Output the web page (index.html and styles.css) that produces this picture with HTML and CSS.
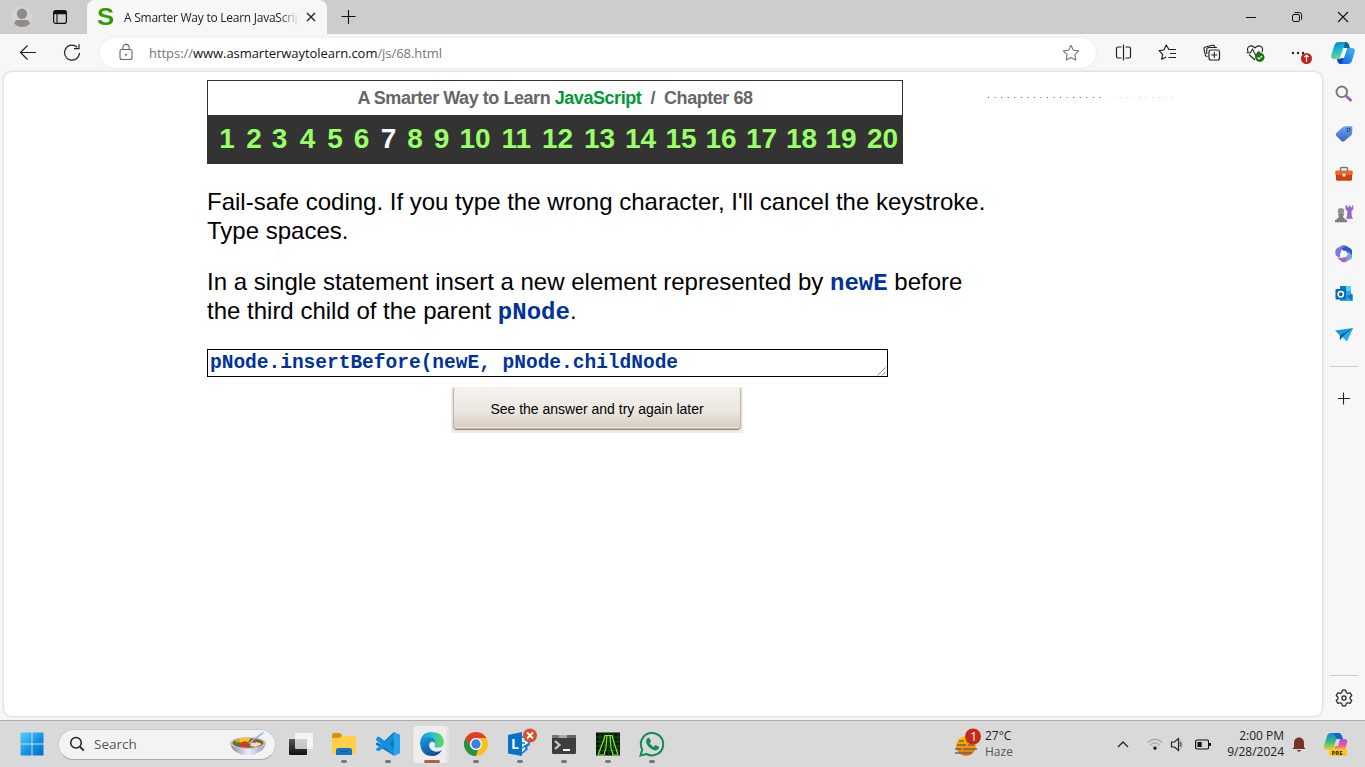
FILE: index.html
```html
<!DOCTYPE html>
<html lang="en">
<head>
<meta charset="utf-8">
<title>A Smarter Way to Learn JavaScript</title>
<link rel="stylesheet" href="styles.css">
</head>
<body>
<div class="screen">
  <header class="tabs">
    <svg class="avatar" width="24" height="24" viewBox="0 0 24 24"><circle cx="12" cy="12" r="10.5" fill="#d6d3d0"/><circle cx="12" cy="8.8" r="5.2" fill="#8f8b88"/><path d="M4.2 18.5q.5-3.6 3.6-3.6h8.6q3.1 0 3.5 3.6-3 3.5-7.8 3.5t-7.9-3.5z" fill="#8f8b88"/></svg>
    <svg class="workspaces" width="16" height="16" viewBox="0 0 16 16"><rect x="1.6" y="1.6" width="12.8" height="12.8" rx="2.2" fill="none" stroke="#111" stroke-width="1.2"/><path d="M1.5 5.3V3.5q0-2 2-2h9q2 0 2 2v1.8z" fill="#111"/><path d="M5 5v9.5" stroke="#111" stroke-width="1.1"/></svg>
    <div class="tab">
      <span class="favicon">S</span>
      <span class="tab-title">A Smarter Way to Learn JavaScript</span>
      <svg width="12" height="12" viewBox="0 0 12 12"><path d="M2 2l8 8M10 2l-8 8" stroke="#222" stroke-width="1.4"/></svg>
    </div>
    <svg class="new-tab" width="16" height="16" viewBox="0 0 16 16"><path d="M1.5 7.5h14M8.5 1v14" stroke="#111" stroke-width="1.1"/></svg>
    <div class="window-buttons">
      <svg width="46" height="34" viewBox="0 0 46 34"><path d="M18 17.5h10" stroke="#111"/></svg>
      <svg width="46" height="34" viewBox="0 0 46 34"><rect x="18.5" y="14.5" width="7" height="7" rx="1.5" fill="none" stroke="#111"/><path d="M20.5 12.6h5q2.1 0 2.1 2.1v5" fill="none" stroke="#111"/></svg>
      <svg width="46" height="34" viewBox="0 0 46 34"><path d="M18 12l10 10M28 12L18 22" stroke="#111" stroke-width="1.1"/></svg>
    </div>
  </header>

  <nav class="toolbar">
    <svg class="back" width="24" height="24" viewBox="0 0 24 24"><path d="M20 11.5H4.5M11.5 4.5l-7 7 7 7" fill="none" stroke="#222" stroke-width="1.2"/></svg>
    <svg class="reload" width="24" height="24" viewBox="0 0 24 24"><path d="M17.2 6.2A7.5 7.5 0 1 0 19.5 12" fill="none" stroke="#222" stroke-width="1.2"/><path d="M19 3.3v4.4h-5" fill="none" stroke="#222" stroke-width="1.2"/></svg>
    <div class="address">
      <svg width="24" height="24" viewBox="0 0 24 24"><rect x="6" y="8.5" width="12" height="10" rx="2" fill="none" stroke="#666" stroke-width="1.1"/><path d="M8.8 8.5V6.6a3.2 3.2 0 0 1 6.4 0v1.9" fill="none" stroke="#666" stroke-width="1.1"/><rect x="11.2" y="12.8" width="1.7" height="1.7" fill="#555"/></svg>
      <span class="url">https://<b>www.asmarterwaytolearn.com</b>/js/68.html</span>
      <svg class="star" width="24" height="24" viewBox="0 0 24 24"><path d="M12 4.2l2.4 5 5.4.7-4 3.8 1 5.4-4.8-2.7-4.8 2.7 1-5.4-4-3.8 5.4-.7z" fill="none" stroke="#777" stroke-width="1.1" stroke-linejoin="round"/></svg>
    </div>
    <div class="tools">
      <svg width="24" height="24" viewBox="0 0 24 24"><path d="M9.5 6H6q-1.5 0-1.5 1.5v8Q4.500 17 6 17h3.500M13.500 6H17q1.500 0 1.500 1.500v8Q18.500 17 17 17h-3.500M11.500 3.500v16" fill="none" stroke="#222" stroke-width="1.2"/></svg>
      <svg width="24" height="24" viewBox="0 0 24 24"><path d="M13.500 8.500h-.6L10.200 4 7.900 9l-4.800.7 3.500 3.600-.9 5 4.500-2.300M13.500 8.500H20M14 12.500h6M12.500 16.500H20" fill="none" stroke="#222" stroke-width="1.2" stroke-linejoin="round"/></svg>
      <svg width="24" height="24" viewBox="0 0 24 24"><rect x="9" y="9" width="10.500" height="10" rx="2" fill="none" stroke="#222" stroke-width="1.2"/><path d="M7.500 15.500q-1.500.2-2.100-1.200L4 8.500q-.4-2 1.400-2.500l7-1.800q1.800-.4 2.300 1.300l.4 1.500M6.700 13V9q0-2.500 2.500-2.500H17M14.300 11v6M11.300 14h6" fill="none" stroke="#222" stroke-width="1.1"/></svg>
      <svg class="health" width="24" height="24" viewBox="0 0 24 24"><path d="M4.200 11q-1.700-3.500.6-5.400 3.200-2 6.200 1.300 3-3.300 6.200-1.300 2.300 1.900.8 5.400M5 13.500l6 5.500M2.500 11.800h4l2-3.700 3.500 7 2-4h2" fill="none" stroke="#222" stroke-width="1.1"/><circle cx="15.800" cy="16.300" r="4.700" fill="#13780f"/><path d="M13.600 16.500l1.500 1.500 3-3.200" fill="none" stroke="#fff" stroke-width="1.100"/></svg>
      <svg class="more" width="28" height="24" viewBox="0 0 28 24"><g fill="#222"><circle cx="5" cy="12" r="1.200"/><circle cx="10" cy="12" r="1.200"/><circle cx="15" cy="12" r="1.200"/></g><circle cx="18.500" cy="17.500" r="5.500" fill="#c52020"/><path d="M18.500 21v-7M16.300 16.200l2.200-2.200 2.200 2.200" fill="none" stroke="#fff" stroke-width="1.200"/></svg>
      <svg class="copilot" width="26" height="26" viewBox="0 0 26 26">
        <defs><linearGradient id="cpA" x1="0" y1="0" x2=".4" y2="1"><stop offset="0" stop-color="#087fb5"/><stop offset=".5" stop-color="#19b5d8"/><stop offset="1" stop-color="#7be06e"/></linearGradient><linearGradient id="cpB" x1="1" y1="0" x2="0" y2="1"><stop offset="0" stop-color="#42b9f1"/><stop offset="1" stop-color="#1554df"/></linearGradient></defs>
        <path d="M9 2h7q2 0 2.800 2.500l1 3.500H17q-2 0-2.700 2L12 17q-.7 2-3 2H4q-3.500 0-2.600-4L4.500 5Q5.700 2 9 2z" fill="url(#cpA)"/><path d="M16.500 8H22q3.500 0 2.700 4l-3 9.500q-1 2.500-4 2.500h-7q-2.200 0-3-2.500L7 19h2.500q2 0 2.600-2z" fill="url(#cpB)"/><path d="M15.800 2q2.200 0 3 2.500l1 3.500H17l-2.500.8q-1.500-3.800 1.300-6.800z" fill="#0866a5"/><path d="M7 19h3q2 0 2.500-2 1.500 5-1.500 7-2.500 0-3.300-2.500z" fill="#173fce"/><path d="M13.300 8h4L14 18h-4z" fill="#f7f7f7"/></svg>
    </div>
  </nav>

  <div class="middle">
    <main class="page">
      <div class="lesson">
        <div class="chapter">
          <h1>A Smarter Way to Learn <em>JavaScript</em> &nbsp;/&nbsp; Chapter 68</h1>
          <div class="numbers"><a>1</a><a>2</a><a>3</a><a>4</a><a>5</a><a>6</a><a class="current">7</a><a>8</a><a>9</a><a>10</a><a>11</a><a>12</a><a>13</a><a>14</a><a>15</a><a>16</a><a>17</a><a>18</a><a>19</a><a>20</a></div>
        </div>
        <p class="hint">Fail-safe coding. If you type the wrong character, I'll cancel the keystroke.<br>Type spaces.</p>
        <p class="question">In a single statement insert a new element represented by <code>newE</code> before<br>the third child of the parent <code>pNode</code>.</p>
        <div class="answer"><span>pNode.insertBefore(newE, pNode.childNode</span>
          <svg width="9" height="9" viewBox="0 0 9 9"><path d="M.5 8.500l8-8M5 8.500L8.500 5" stroke="#666" stroke-width=".8"/></svg></div>
        <div class="button-frame"><div class="button">See the answer and try again later</div></div>
      </div>
      <svg class="dots" width="190" height="3" viewBox="0 0 190 3"><path d="M1 1.500h115" stroke="#555" stroke-dasharray="1 5.550"/><path d="M132.500 1.500h56" stroke="#ccc" stroke-dasharray="1 5.500"/><path d="M120 1.500h1M126.500 1.500h1" stroke="#ddd"/></svg>
    </main>
    <aside class="sidebar">
      <svg width="20" height="20" viewBox="0 0 20 20"><path d="M11 11l6.500 6" stroke="#9b62cf" stroke-width="3"/><circle cx="7.800" cy="7.800" r="5.300" fill="#f2f7fb" stroke="#777" stroke-width="1.900"/></svg>
      <svg width="20" height="20" viewBox="0 0 20 20"><defs><linearGradient id="tag" x2="0" y2="1"><stop stop-color="#6da4ee"/><stop offset="1" stop-color="#3b67c5"/></linearGradient></defs><path d="M10.500 2.500l6.200-.5q1.800 0 1.800 1.800l-.6 6.100q-.1.800-.7 1.400L10.500 17q-1.500 1.300-3 0L2.300 12q-1.300-1.500 0-3L9 3.100q.6-.5 1.500-.6z" fill="url(#tag)"/><circle cx="14.500" cy="5.700" r="1.300" fill="#fff" stroke="#244b91" stroke-width="1.300"/></svg>
      <svg width="20" height="20" viewBox="0 0 20 20"><path d="M6.500 7V4.500q0-1 1-1h5q1 0 1 1V7" fill="none" stroke="#777" stroke-width="1.500"/><rect x="1.300" y="6.500" width="17.400" height="4.700" rx="1" fill="#e7682e"/><path d="M2 11h16v4.500q0 1.200-1.200 1.200H3.200Q2 16.700 2 15.500z" fill="#c84312"/><circle cx="10" cy="11" r="1.800" fill="#ddd"/></svg>
      <svg width="20" height="20" viewBox="0 0 20 20"><path d="M11.500 1.500h2v1.700H15V1.500h1.500v1.700H18V1.500h1.200v4L17.500 7l.3 5.500 1.200 2.300h-7l1-2.300.4-5.500-1.900-1.500z" fill="#9567ce"/><circle cx="7" cy="7.300" r="3.200" fill="#929292"/><path d="M4 10h6v1.500H8.700q.4 2.500 2.800 3.500v1H13v2.300H1V16h1.500v-1q2.500-1 2.800-3.500H4z" fill="#7e7e7e"/></svg>
      <svg width="20" height="20" viewBox="0 0 20 20"><path d="M8 1.500q2-.9 3.700.1L15.500 4l-8 1.500-2 8.500L2.400 12q-1-.8-1-2V7q0-1.600 1.300-2.400z" fill="#7c7bdc"/><path d="M12 2l4.600 2.600Q18 5.500 18 7.200V12l-5.700-2.500-5-4.500z" fill="#3156c7"/><path d="M12.500 9.500l5.500 1v2q0 1.700-1.300 2.400l-5.200 3q-1.800.9-3.400 0L3.500 14l5.500-.3z" fill="#9c69cc"/><path d="M14.500 7l3.500 5q.2 2-1.300 2.900L12 17.600z" fill="#6eaae8"/><path d="M8 6.700h4l2 3.300-2 3.300H8L6 10z" fill="#f7f7f7"/></svg>
      <svg width="20" height="20" viewBox="0 0 20 20"><path d="M6 2h11v7l1.500 2v6H6z" fill="#28a8ea"/><path d="M11 2h6v5h-6z" fill="#53d3f5"/><path d="M6 2h6v5H6zM12 12l6.500-2v7z" fill="#087cc3"/><rect x="1.500" y="5" width="10.500" height="10.500" rx="1" fill="#0869b5"/><circle cx="6.800" cy="10.200" r="2.700" fill="none" stroke="#fff" stroke-width="1.500"/></svg>
      <svg width="20" height="20" viewBox="0 0 20 20"><path d="M1 6.500L19 4l-6 13-4.500-4-2.600 3v-4.500z" fill="#199cdb"/><path d="M5.900 11.500L19 4 8.500 13l-2.600 3z" fill="#095f9b"/><path d="M8.500 13L19 4l-6 13z" fill="#23b1e9"/></svg>
      <hr class="rule">
      <svg class="add" width="20" height="20" viewBox="0 0 20 20"><path d="M4 10.500h12M9.500 4.500v12" stroke="#222" stroke-width="1.100"/></svg>
      <hr class="rule rule-low">
      <svg class="gear" width="20" height="20" viewBox="0 0 20 20"><path d="M8.300 2.200h3.400l.5 2.300 1.600.9 2.300-.7 1.700 2.900L16 9.200v1.700l1.800 1.600-1.700 2.900-2.300-.7-1.600.9-.5 2.300H8.300l-.5-2.300-1.600-.9-2.300.7-1.700-2.900L4 10.900V9.200L2.200 7.600l1.700-2.900 2.300.7 1.600-.9z" fill="none" stroke="#222" stroke-width="1.200" stroke-linejoin="round"/><circle cx="10" cy="10" r="2.100" fill="none" stroke="#222" stroke-width="1.200"/></svg>
    </aside>
  </div>

  <footer class="taskbar">
    <svg class="start" width="24" height="24" viewBox="0 0 24 24"><defs><linearGradient id="win" x2="1" y2="1"><stop stop-color="#4fd0fb"/><stop offset=".6" stop-color="#0c8ee2"/><stop offset="1" stop-color="#0070cb"/></linearGradient></defs><path d="M.5 1q0-.5.5-.5h10.500v11H.5zM12.500.5H23q.5 0 .5.500v10.500h-11zM.5 12.500h11v11H1q-.5 0-.5-.5zM12.500 12.500h11V23q0 .5-.5.500H12.500z" fill="url(#win)"/></svg>
    <div class="search">
      <svg width="16" height="16" viewBox="0 0 16 16"><circle cx="7" cy="6.800" r="5.300" fill="none" stroke="#222" stroke-width="1.500"/><path d="M10.800 10.600l4 4" stroke="#222" stroke-width="1.800"/></svg>
      <span>Search</span>
      <svg class="bowl" width="38" height="24" viewBox="0 0 38 24"><defs><linearGradient id="bowl" x2="1"><stop stop-color="#8582a7"/><stop offset=".5" stop-color="#f0edf8"/><stop offset="1" stop-color="#9f98b7"/></linearGradient></defs><path d="M1 11q2 9 10 10.800v1h15v-1q9-1.800 11-10.800z" fill="url(#bowl)"/><ellipse cx="19" cy="11" rx="18" ry="6" fill="#c7c3d8"/><ellipse cx="19" cy="11" rx="15.500" ry="4.800" fill="#76651f"/><path d="M6 9q6-5 16-3l-3 4-11 1z" fill="#f1c629"/><path d="M4 11l6-1 5 3-5 2z" fill="#378b32"/><path d="M11 11l5-2 5 3-3 3h-7z" fill="#d63b28"/><path d="M22 11l6-1 5 2-6 3-6-1z" fill="#ecddc0"/><path d="M19 11l8-6 7-5 1 1-9 7-5 4z" fill="#86b9ea"/><circle cx="26" cy="9" r="1.800" fill="#d93c27"/><circle cx="9" cy="8.500" r="1.700" fill="#e69122"/></svg>
    </div>
    <div class="apps">
      <svg width="44" height="46" viewBox="0 0 44 46"><defs><linearGradient id="tv" x2="0" y2="1"><stop stop-color="#555"/><stop offset="1" stop-color="#111"/></linearGradient></defs><rect x="11" y="18" width="18" height="16" rx="1" fill="url(#tv)"/><rect x="17" y="12" width="18" height="16" rx="1" fill="#fff" opacity=".72"/><path d="M29 12h6v16h-6zM17 12h12v6H17z" fill="#f4f4f4"/></svg>
      <svg width="44" height="46" viewBox="0 0 44 46"><path d="M10 14q0-2 2-2h6l2 2.500V18H10z" fill="#d99200"/><path d="M10 17h8l2-2h13q1 0 1 1v16q0 1-1 1H11q-1 0-1-1z" fill="#ffcf44"/><path d="M14 29q0-2 2-2h12q2 0 2 2v5H14z" fill="#1475c7"/><path d="M18 30.500h8" stroke="#09599b" stroke-width="1.500"/></svg>
      <svg width="44" height="46" viewBox="0 0 44 46"><path d="M28 11L14.500 23.500l-2.800-2.200-1.700.9v1.500l18 11 2-2V13z" fill="#087bbd"/><path d="M10 28l2-1.700L28 13v6L12.700 30.200 10 29z" fill="#1690d8"/><path d="M10 18l1.700-2.200h1.500L28 27v7L10 19z" fill="#1690d8"/><path d="M28 11l6 2.700v18.600L28 35z" fill="#27a4ed"/></svg>
      <svg width="44" height="46" viewBox="0 0 44 46"><defs><linearGradient id="edgeTop" x2="1"><stop stop-color="#1696de"/><stop offset=".5" stop-color="#28bfd2"/><stop offset="1" stop-color="#64dd50"/></linearGradient><linearGradient id="edgeBot" x1="0" y1="0" x2=".6" y2="1"><stop stop-color="#1d9fe0"/><stop offset="1" stop-color="#0d4c9b"/></linearGradient></defs><path d="M31 4q6 0 6 5v28q0 5-6 5z" fill="#ececec"/><path d="M35.500 4.500h.5q3 0 3 4v30q0 4-3 4h-.5z" fill="#ececec" stroke="#cfcfcf" stroke-width=".6"/><rect x="3" y="4.500" width="34" height="38" rx="4" fill="#ededed" stroke="#d0d0d0" stroke-width=".6"/><path d="M10 22Q11 11 22 11q11 0 12 10 0 5.500-6 5.700-5 0-3-3 .7-5.200-6-5.200-5 0-9 3.500z" fill="url(#edgeTop)"/><path d="M10 22q2-5.800 8.200-5.800 7.300 0 6.800 6-2.500-3-5.200-.4-2.400 5.200 3 8 5 2.200 9.200-.8Q28.500 35 22 35q-11 0-12-13z" fill="url(#edgeBot)"/></svg>
      <svg width="44" height="46" viewBox="0 0 44 46"><circle cx="22" cy="23" r="12" fill="#fbc116"/><path d="M11.600 17A12 12 0 0 1 32.400 17H22a6 6 0 0 0-5.200 9z" fill="#e33b2e"/><path d="M11.600 17l5.200 9A6 6 0 0 0 24 28.600L22 35A12 12 0 0 1 11.600 17z" fill="#229447"/><circle cx="22" cy="23" r="6" fill="#fff"/><circle cx="22" cy="23" r="4.700" fill="#3b7de9"/></svg>
      <svg width="44" height="46" viewBox="0 0 44 46"><path d="M20 16h11v8l-4 1 2 3-5 4-4-2z" fill="#e6f3ff" stroke="#197bc9" stroke-width="1.500"/><path d="M24 27l6-4-3 7M20 22h7" fill="none" stroke="#197bc9" stroke-width="1.500"/><path d="M10 14l14-3v24l-14-2.500z" fill="#0872c8"/><text x="13" y="28" class="lync">L</text><circle cx="32" cy="14.500" r="7" fill="#d4512d"/><path d="M29 11.500l6 6M35 11.500l-6 6" stroke="#fff" stroke-width="1.800"/></svg>
      <svg width="44" height="46" viewBox="0 0 44 46"><rect x="10" y="14" width="24" height="19" rx="1.500" fill="#3d3d3f"/><path d="M10 16v-1q0-1 1-1h6v3h-7z" fill="#777"/><path d="M17 14h8v3h-8z" fill="#aaa"/><path d="M25 14h8q1 0 1 1v2h-9z" fill="#666"/><path d="M13 20l4.500 4-4.500 4" fill="none" stroke="#ccc" stroke-width="2.200"/><path d="M21 29h7" stroke="#fff" stroke-width="2"/></svg>
      <svg width="44" height="46" viewBox="0 0 44 46"><rect x="10" y="11.500" width="24" height="23" fill="#071706"/><path d="M10 16h24M10 20.500h24M10 25h24M10 29.500h24M14 11.500v23M18.500 11.500v23M23 11.500v23M27.500 11.500v23M32 11.500v23" stroke="#17611b" stroke-width=".8"/><path d="M12 34l5-13 2-6.500h7l2 7L32 34M12 34h6l2-7 1-13M32 34h-5l-2-7-1-13" fill="none" stroke="#83ed2e" stroke-width="1.200"/></svg>
      <svg width="44" height="46" viewBox="0 0 44 46"><path d="M10.500 34.500l1.700-6A11.200 11.200 0 1 1 16.700 33z" fill="none" stroke="#148b55" stroke-width="2"/><path d="M16.500 18.500q1.500-2.500 3-1.200l1.500 3-1.300 2q1.300 2.500 4 3.600l1.700-1.900 3.600 1.700q.4 2.300-2 3.400-3 1.300-7-2.100-5-4.500-3.500-8.500z" fill="#148b55"/></svg>
    </div>
    <div class="marks"><i class="none"></i><i></i><i></i><i class="active"></i><i></i><i></i><i></i><i></i><i></i></div>
    <div class="weather">
      <svg width="30" height="32" viewBox="0 0 30 32"><defs><linearGradient id="sun" x2="0" y2="1"><stop stop-color="#ffcb00"/><stop offset="1" stop-color="#ec6800"/></linearGradient></defs><circle cx="13" cy="18" r="10" fill="url(#sun)"/><path d="M6 13h5M4 17h9M15 17h6M2 21h6M10 21h14M2 25h17" stroke="#666" stroke-width="1.300"/><circle cx="20" cy="8.500" r="8" fill="#c42b1c"/><text x="17.300" y="13" class="count">1</text></svg>
      <div class="weather-text"><div>27°C</div><div class="haze">Haze</div></div>
    </div>
    <svg class="chevron" width="12" height="12" viewBox="0 0 12 12"><path d="M1 9l5-5 5 5" fill="none" stroke="#222" stroke-width="1.300"/></svg>
    <svg class="status" width="62" height="18" viewBox="0 0 62 18"><g fill="none" stroke="#aaa" stroke-width="1.200"><path d="M.8 7.500q7.200-6.500 14.400 0M3.200 10q4.800-4.200 9.600 0M5.500 12.300q2.500-2 5 0"/><path d="M33 4.500q4 5 0 10"/></g><circle cx="8" cy="13.200" r="1.500" fill="#111"/><path d="M24.500 7h3l4-3.500v12l-4-3.500h-3z" fill="none" stroke="#222" stroke-width="1.200"/><path d="M33 7.200q1.400 2.200 0 4.400" fill="none" stroke="#222"/><rect x="48.600" y="5" width="13" height="9" rx="1.500" fill="none" stroke="#111" stroke-width="1.200"/><rect x="50.500" y="7" width="4.200" height="5" fill="#111"/></svg>
    <i class="battery-tip"></i>
    <div class="clock"><div>2:00 PM</div><div>9/28/2024</div></div>
    <svg class="bell" width="14" height="16" viewBox="0 0 14 16"><path d="M2 11V6.500a5 5 0 0 1 10 0V11l1.500 2H.5zM5 14h4q-.5 1.800-2 1.800T5 14z" fill="#7b3029"/></svg>
    <svg class="preview" width="26" height="26" viewBox="0 0 26 26"><defs><linearGradient id="prA" x2="0" y2="1"><stop stop-color="#1686e5"/><stop offset=".5" stop-color="#36b985"/><stop offset="1" stop-color="#efd12f"/></linearGradient><linearGradient id="prB" x2="0" y2="1"><stop stop-color="#9a55eb"/><stop offset=".5" stop-color="#ea5699"/><stop offset="1" stop-color="#f6a15a"/></linearGradient></defs><path d="M8 2h7q2 0 3 3l1 3h-3q-2 0-2.500 2L11 17q-1 2-3 2H4q-4 0-3-4L4 5q1-3 4-3z" fill="url(#prA)"/><path d="M10 2h6q2 0 3 3l1 3h-6z" fill="#1762cd"/><path d="M15 8h6q4 0 3 4l-2 7H11l3-9q.5-2 1-2z" fill="url(#prB)"/><path d="M13.500 8H17l-2 7h-4z" fill="#d9d9d9"/><rect x="6" y="17.500" width="18" height="7.500" rx="2" fill="#ffc514"/><text x="8.500" y="23.700" class="pre">PRE</text></svg>
  </footer>
</div>
</body>
</html>
```
FILE: styles.css
```css
* { box-sizing: border-box; }
body { margin: 0; background: #f7f7f7; font-family: "Open Sans", "Noto Sans", sans-serif; color: #222; }
svg { display: block; flex: none; }
.screen { width: 1365px; height: 767px; display: flex; flex-direction: column; overflow: hidden; }

/* Tab strip */
.tabs { height: 34px; flex: none; display: flex; align-items: center; background: #cdcdcd; }
.avatar { margin-left: 10px; }
.workspaces { margin: 0 19px 0 18px; }
.tab { width: 240px; height: 34px; display: flex; align-items: center; background: #f7f7f7; border-radius: 8px 8px 0 0; }
.favicon { width: 17px; margin-left: 10px; font: bold 23px/24px "Liberation Sans", sans-serif; color: #2f9c00; transform: scaleX(1.12); transform-origin: left; }
.tab-title { width: 175px; margin: 0 6px 0 10px; overflow: hidden; white-space: nowrap; font-size: 12px; letter-spacing: -.25px; -webkit-mask-image: linear-gradient(90deg, #000 155px, transparent 175px); mask-image: linear-gradient(90deg, #000 155px, transparent 175px); }
.new-tab { margin-left: 13px; }
.window-buttons { display: flex; margin-left: auto; margin-right: -1px; }

/* Toolbar */
.toolbar { height: 37px; flex: none; display: flex; align-items: center; background: #f7f7f7; padding: 0 9px 0 16px; }
.reload { margin: 0 16px 0 20px; }
.address { width: 998px; height: 30px; display: flex; align-items: center; padding: 0 13px 0 14px; background: #fff; border-radius: 15px; box-shadow: 0 0 3px #e4e4e4; }
.url { margin-left: 11px; font-size: 13px; letter-spacing: -.05px; color: #767676; white-space: nowrap; }
.url b { font-weight: 400; color: #111; }
.star { margin-left: auto; }
.tools { display: flex; align-items: center; margin-left: 16px; gap: 20px; }
.more { margin-right: -6px; }

/* Browser body */
.middle { height: 649px; flex: none; display: flex; padding: 1px 0 4px 4px; background: #f7f7f7; }
.page { width: 1318px; display: flex; align-items: flex-start; background: #fff; border-radius: 8px; box-shadow: 0 0 3px #bbb; font-family: "Liberation Sans", Arial, sans-serif; color: #000; }
.lesson { width: 780px; margin: 8px 0 0 203px; }
.chapter { width: 696px; height: 84px; border: 1px solid #333; background: #fff; }
h1 { height: 34px; margin: 0; text-align: center; font-size: 18px; line-height: 34px; letter-spacing: -.45px; color: #666; }
h1 em { font-style: normal; color: #093; }
.numbers { height: 48px; display: grid; grid-template-columns: 27px 25.5px 28px 27.5px 26.5px 27px 26.5px 26.5px 25.7px 42px 40.5px 42px 41px 40.5px 40px 40.5px 40px 39.5px 41.5px 31px; padding-left: 11.2px; background: #333; color: #9f6; font-size: 28px; font-weight: bold; line-height: 48px; }
.current { color: #fff; }
p { margin: 0; font-size: 24px; line-height: 28.5px; white-space: nowrap; }
.hint { margin-top: 24px; }
.question { margin-top: 23px; }
code { font: bold 24px/20px "Liberation Mono", monospace; color: #039; }
.answer { width: 681px; height: 28px; margin-top: 24px; padding: 0 1px 0 2px; display: flex; align-items: flex-end; justify-content: space-between; border: 1px solid #000; font: bold 19.5px/26px "Liberation Mono", monospace; color: #039; }
.button-frame { width: 292px; height: 46px; margin: 10px 0 0 244px; padding: 0 2px 4px; background: #f0ede8; }
.button { height: 42px; background: linear-gradient(#f5f2ef, #ebe6e0 60%, #d7cbc0); border: 1px solid #c0b5a9; border-top-color: #f5f2ef; border-radius: 4px; box-shadow: 0 1px 1px #8c8176, inset 0 -1px #eee8e1; text-align: center; font-size: 14px; line-height: 42px; }
.dots { margin-top: 24px; }

/* Sidebar */
.sidebar { width: 43px; display: flex; flex-direction: column; align-items: center; gap: 20px; padding-top: 12px; }
.rule { width: 28px; height: 1px; margin: 2px 0 0; border: 0; background: #ccc; flex: none; }
.add { margin-top: 1px; }
.rule-low { margin-top: 247px; }
.gear { margin-top: -8px; }

/* Taskbar */
.taskbar { height: 47px; flex: none; display: flex; align-items: center; position: relative; border-top: 1px solid #aaa; background: #d9d9d9; font-size: 12px; }
.start { margin-left: 20px; }
.search { width: 218px; height: 31px; display: flex; align-items: center; margin-left: 14px; padding: 0 8px 0 10px; border: 1px solid #cacaca; border-bottom-color: #aaa; border-radius: 16px; background: #f3f3f3; font-size: 13.5px; color: #555; }
.search span { margin-left: 9px; }
.bowl { margin-left: auto; }
.apps { display: flex; margin-left: 2px; width: 399px; }
.marks { position: absolute; left: 278px; top: 39px; display: grid; grid-template-columns: repeat(9, 44px); justify-items: center; }
.marks i { width: 6px; height: 3px; border-radius: 2px; background: #777; }
.marks .active { width: 16px; background: #b95c4f; }
.marks .none { background: none; }
.weather { display: flex; align-items: center; margin-left: 276px; width: 160px; }
.weather-text { margin-left: 2px; line-height: 16px; }
.haze { color: #555; }
.chevron { margin-left: 4px; }
.status { margin-left: 18px; }
.battery-tip { width: 2px; height: 3px; background: #111; }
.clock { width: 73px; text-align: right; line-height: 16px; white-space: nowrap; }
.bell { margin-left: 8px; }
.preview { margin-left: 17px; }
.lync { font: bold 14px "Open Sans", sans-serif; fill: #fff; }
.count { font: 12px "Open Sans", sans-serif; fill: #fff; }
.pre { font: bold 6px "Open Sans", sans-serif; fill: #222; }
```
